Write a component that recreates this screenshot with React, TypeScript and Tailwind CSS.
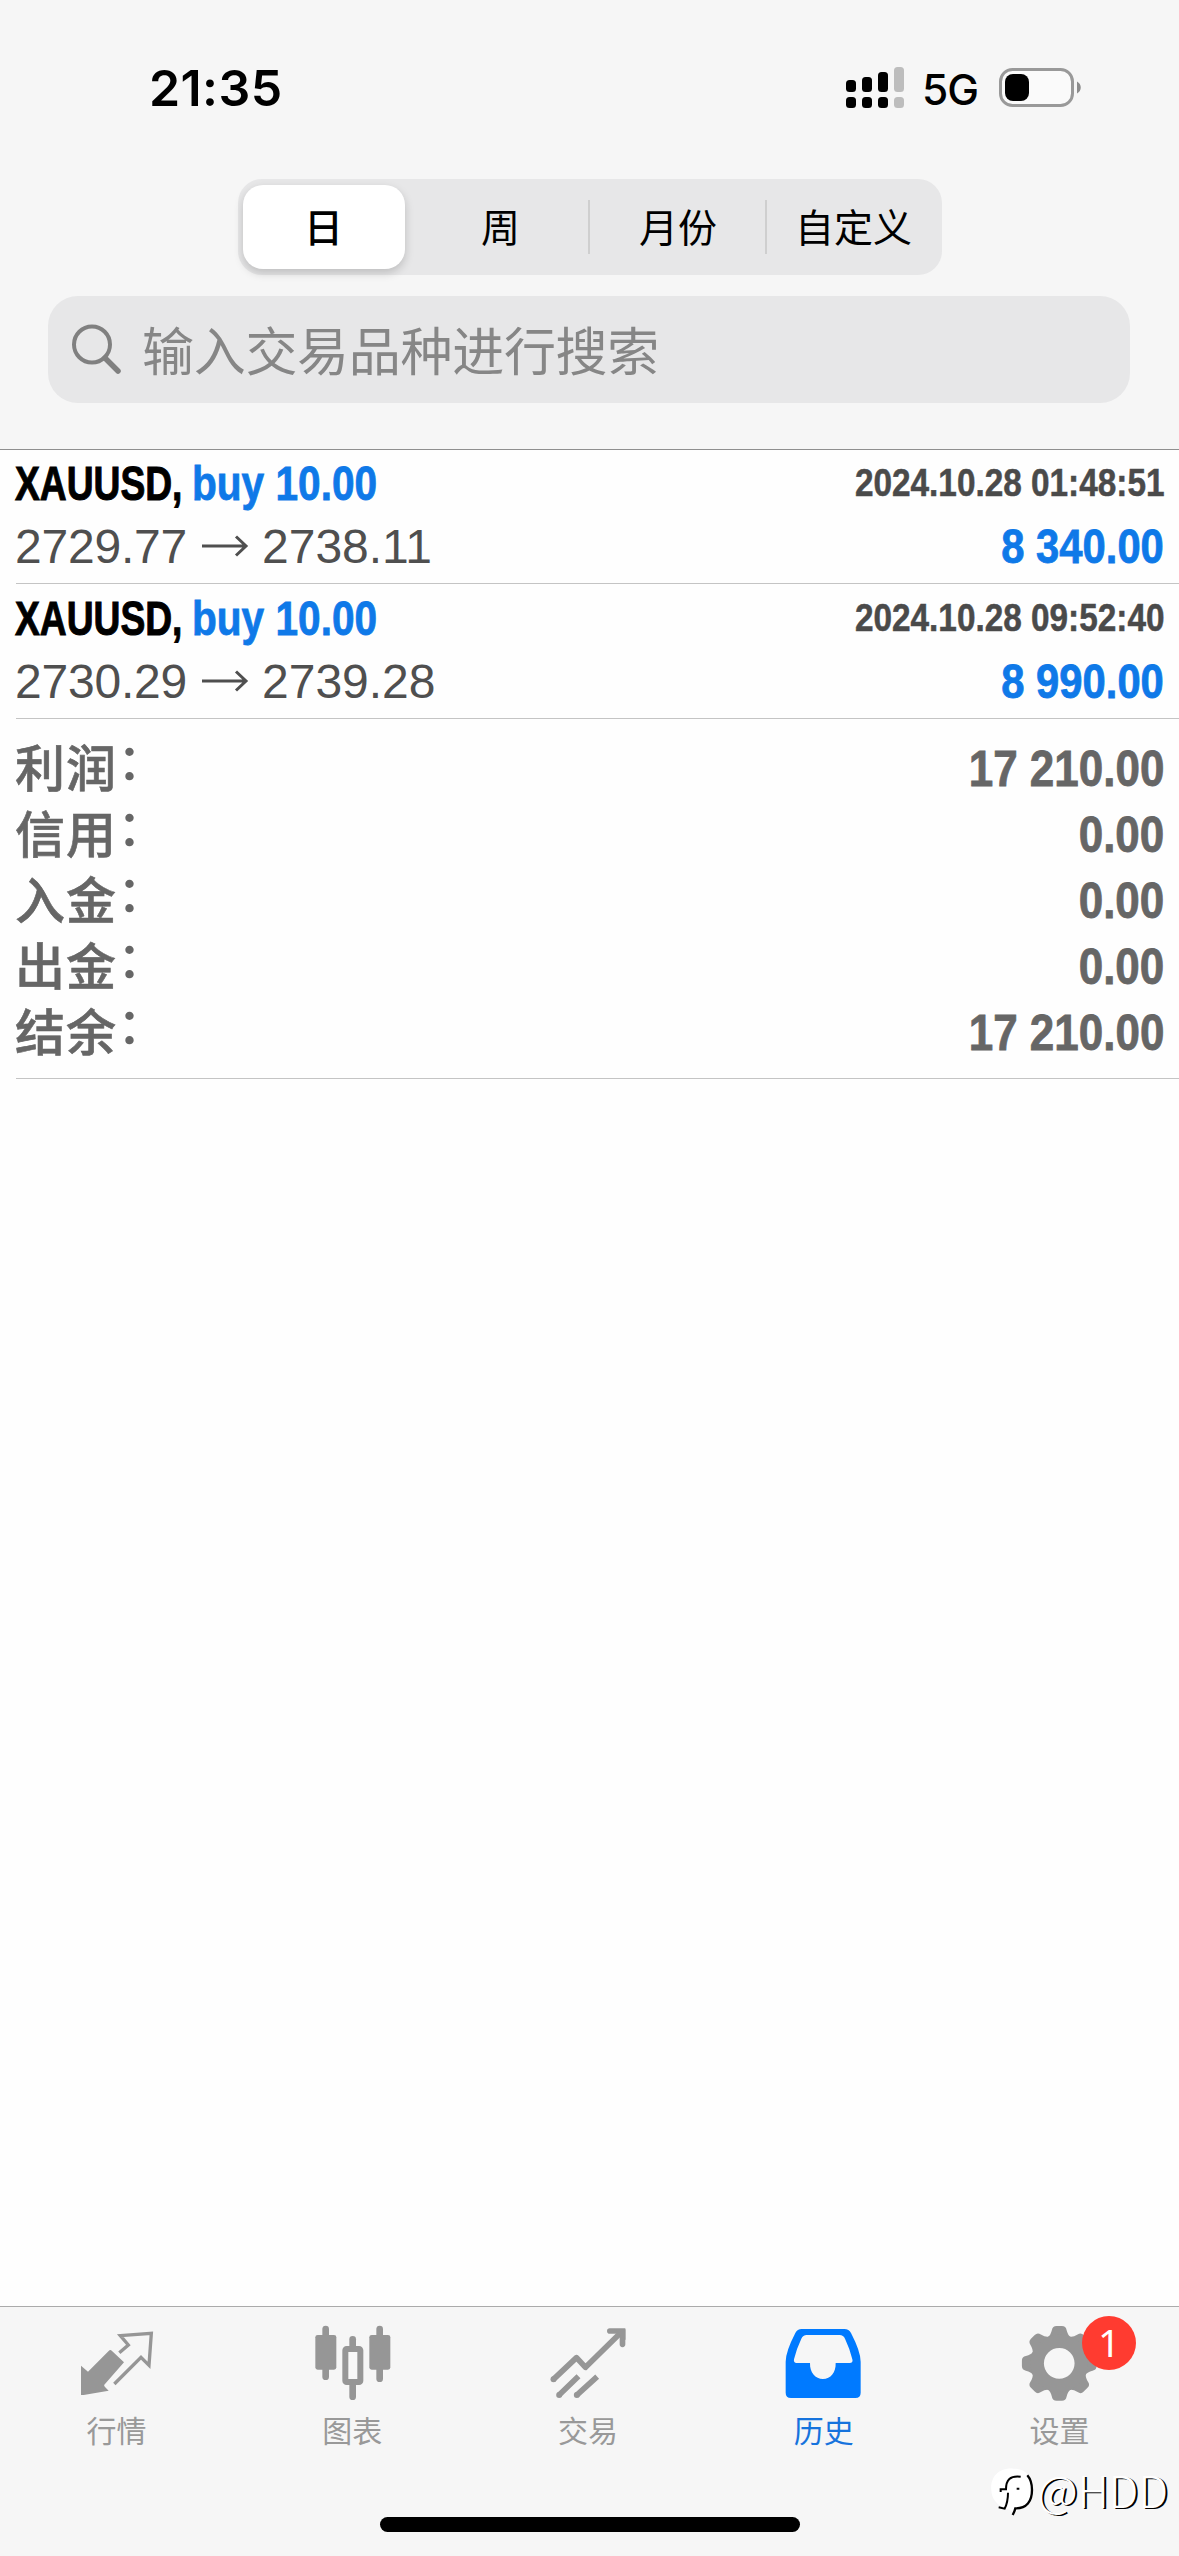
import React from "react";

const CJK = "font-['Noto_Sans_CJK_SC',sans-serif]";
const HELV = "font-['Liberation_Sans',Arial,sans-serif]";

type Deal = { from: string; to: string; time: string; profit: string };

const deals: Deal[] = [
  { from: "2729.77", to: "2738.11", time: "2024.10.28 01:48:51", profit: "8 340.00" },
  { from: "2730.29", to: "2739.28", time: "2024.10.28 09:52:40", profit: "8 990.00" },
];

const totals = [
  { label: "利润", value: "17 210.00" },
  { label: "信用", value: "0.00" },
  { label: "入金", value: "0.00" },
  { label: "出金", value: "0.00" },
  { label: "结余", value: "17 210.00" },
];

function Signal() {
  return (
    <svg className="block h-[44px] w-[60px]" viewBox="0 0 60 44">
      <g fill="#000">
        <rect x="0" y="14" width="10" height="12" rx="3.5" />
        <rect x="16" y="11" width="10" height="15" rx="3.5" />
        <rect x="32" y="6" width="10" height="20" rx="3.5" />
        <rect x="0" y="31" width="10" height="11" rx="3.5" />
        <rect x="16" y="31" width="10" height="11" rx="3.5" />
        <rect x="32" y="31" width="10" height="11" rx="3.5" />
      </g>
      <g fill="#bdbdbd">
        <rect x="48" y="1" width="10" height="25" rx="3.5" />
        <rect x="48" y="31" width="10" height="11" rx="3.5" />
      </g>
    </svg>
  );
}

function Battery() {
  return (
    <svg className="block h-[40px] w-[84px]" viewBox="0 0 84 40">
      <rect x="1.5" y="1.5" width="72" height="36" rx="12" fill="#fafafa" stroke="#999" strokeWidth="3" />
      <rect x="6" y="6" width="24" height="27" rx="8" fill="#000" />
      <path d="M78 13.5c5 2.5 5 9.500 0 12z" fill="#8c8c8c" />
    </svg>
  );
}

function StatusBar() {
  return (
    <div className="flex h-[179px] items-start justify-between pl-[149px] pr-[96px]">
      <div className="mt-[58px] font-['Inter',sans-serif] text-[50px] font-semibold leading-[60px] tracking-[0.4px] text-black">21:35</div>
      <div className="mt-[66px] flex items-start">
        <Signal />
        <span className="ml-[16px] mr-[21px] w-[56px] font-['Inter',sans-serif] text-[42.5px] font-medium leading-[48px] tracking-[-1px] text-black">5G</span>
        <div className="mt-[2px]"><Battery /></div>
      </div>
    </div>
  );
}

function Segments() {
  return (
    <div className={`${CJK} mx-auto flex h-[96px] w-[704px] items-center rounded-[24px] bg-[#e7e7e8] text-[39px] leading-[56px] text-black`}>
      <div className="ml-[5px] flex h-[84px] w-[162px] items-center justify-center rounded-[20px] bg-white pb-[4px] font-medium shadow-[0_4px_10px_rgba(0,0,0,0.18)]">日</div>
      <div className="ml-[7px] w-[176px] pb-[4px] pl-[2px] text-center">周</div>
      <div className="h-[54px] w-[2px] bg-[#cfcfcf]" />
      <div className="w-[175px] pb-[4px] pl-[2px] text-center">月份</div>
      <div className="h-[54px] w-[2px] bg-[#cfcfcf]" />
      <div className="w-[172px] pb-[4px] pl-[2px] text-center">自定义</div>
    </div>
  );
}

function SearchField() {
  return (
    <div className="ml-[48px] mt-[21px] flex h-[107px] w-[1082px] items-center rounded-[30px] bg-[#e7e7e8]">
      <svg className="ml-[24px] mt-[-1px] block h-[50px] w-[50px]" viewBox="0 0 50 50" fill="none" stroke="#808080">
        <circle cx="20" cy="20.500" r="18" strokeWidth="4" />
        <path d="M33 34 46 47" strokeWidth="5.500" strokeLinecap="round" />
      </svg>
      <span className={`${CJK} ml-[20px] pb-[2px] text-[52px] leading-[76px] tracking-[-0.3px] text-[#868686]`}>输入交易品种进行搜索</span>
    </div>
  );
}

function DealRow({ deal }: { deal: Deal }) {
  return (
    <div className={`${HELV} ml-[16px] h-[135px] border-b border-[#c4c4c4] pr-[15px]`}>
      <div className="flex h-[66px] items-start pt-[7px] text-[48px] font-bold leading-[56px]">
        <span className="ml-[-1px] w-[177px] origin-left scale-x-[0.775] whitespace-nowrap text-black [-webkit-text-stroke:1px_#000]">XAUUSD,</span>
        <span className="origin-left scale-x-[0.846] whitespace-nowrap text-[#0f79e8] [-webkit-text-stroke:0.8px_#0f79e8]">buy 10.00</span>
        <span className="ml-auto mt-[-1px] origin-right scale-x-[0.866] whitespace-nowrap text-[38.500px] text-[#4a4a4a] [-webkit-text-stroke:0.5px_#4a4a4a]">{deal.time}</span>
      </div>
      <div className="flex h-[62px] items-start whitespace-nowrap pt-[4px] text-[48px] leading-[56px]">
        <span className="ml-[-1px] w-[186px] tracking-[-0.2px] text-[#4f4f4f]">{deal.from}</span>
        <svg className="mt-[15px] block h-[24px] w-[48px]" viewBox="0 0 48 24" fill="none" stroke="#4f4f4f" strokeWidth="3">
          <path d="M1 12H45M35 2.500 45 12 35 21.500" />
        </svg>
        <span className="ml-[13px] text-[#4f4f4f]">{deal.to}</span>
        <span className="ml-auto origin-right scale-x-[0.870] font-bold text-[#0f79e8] [-webkit-text-stroke:0.8px_#0f79e8]">{deal.profit}</span>
      </div>
    </div>
  );
}

function Totals() {
  return (
    <div className="ml-[16px] h-[360px] border-b border-[#c4c4c4] pr-[15px] pt-[15px]">
      {totals.map((t) => (
        <div key={t.label} className="flex h-[66px] items-start justify-between text-[#666]">
          <div className={`${CJK} flex items-start text-[50px] font-medium leading-[66px]`}>
            <span className="ml-[-1px] mt-[-2px] w-[102px] whitespace-nowrap tracking-[1px] [-webkit-text-stroke:0.6px_#666]">{t.label}</span>
            <span className="mt-[-9px] w-[50px]">：</span>
          </div>
          <span className={`${HELV} origin-right scale-x-[0.880] whitespace-nowrap pt-[2px] text-[50px] font-bold leading-[66px] [-webkit-text-stroke:0.8px_#666]`}>{t.value}</span>
        </div>
      ))}
    </div>
  );
}

const iconClass = "block h-[80px] w-[80px]";

function QuotesIcon() {
  return (
    <svg className={iconClass} viewBox="114 99 240 240" fill="#969696">
      <path d="M123 227 144 245 206 183Q211 177 216 183L252 217 193 284Q191 287 195 291L206 302 131 315H123Z" />
      <path d="M238 188 265 165 241 137 334 130 327 226 303 202 223 282" fill="none" stroke="#969696" strokeWidth="10" />
    </svg>
  );
}

function ChartIcon() {
  return (
    <svg className={iconClass} viewBox="821 99 240 240" fill="#969696">
      <rect x="825" y="135" width="63" height="104" rx="7" />
      <rect x="846" y="107" width="20" height="163" rx="10" />
      <rect x="987" y="135" width="63" height="104" rx="7" />
      <rect x="1008" y="107" width="20" height="169" rx="10" />
      <rect x="927" y="138" width="20" height="50" rx="10" />
      <rect x="927" y="265" width="20" height="65" rx="10" />
      <rect x="915" y="177" width="45" height="99" rx="4" fill="#f8f8f8" stroke="#969696" strokeWidth="18" />
    </svg>
  );
}

function TradeIcon() {
  return (
    <svg className={iconClass} viewBox="148.5 99 240 240" fill="none" stroke="#969696" strokeWidth="17">
      <path d="M161 269 231 203 258 232 362 130" strokeLinejoin="round" />
      <path d="M331 123H369V163" strokeLinecap="round" />
      <path d="M345 118H378V150Z" fill="#969696" stroke="none" />
      <path d="M178 316 237 259M231 316 293 260" />
      <g fill="#969696" stroke="none">
        <circle cx="162" cy="268" r="9" />
        <circle cx="179" cy="315" r="9" />
        <circle cx="232" cy="315" r="9" />
      </g>
    </svg>
  );
}

function HistoryIcon() {
  return (
    <svg className={iconClass} viewBox="856 99 240 240">
      <path
        fill="#007aff"
        fillRule="evenodd"
        d="M906 117H1034Q1048 117 1054 129Q1083 185 1083 215V308Q1083 324 1067 324H874Q858 324 858 308V215Q858 185 887 129Q893 117 906 117ZM921 135Q910 135 905 146Q891 175 883 208Q881 219 891 219H931C930 248 947 267 970 267S1009 248 1008 219H1050Q1061 219 1058 208Q1050 175 1036 146Q1031 135 1020 135Z"
      />
    </svg>
  );
}

function SettingsIcon() {
  const teeth = [0, 45, 90, 135, 180, 225, 270, 315];
  return (
    <svg className={iconClass} viewBox="183.3 99 240 240" fill="#969696">
      {teeth.map((a) => (
        <path key={a} transform={`rotate(${a} 298 220)`} d="M264 141Q272 136 276 120Q278 108 290 108H306Q318 108 320 120Q324 136 332 141V160H264Z" />
      ))}
      <circle cx="298" cy="220" r="66" fill="none" stroke="#969696" strokeWidth="40" />
    </svg>
  );
}

function Tab({ label, active, badge, children }: { label: string; active?: boolean; badge?: string; children: React.ReactNode }) {
  return (
    <div className="flex flex-1 flex-col items-center pt-[16px]">
      <div className="relative">
        {children}
        {badge && (
          <span className="absolute left-[61px] top-[-7px] flex h-[54px] w-[54px] items-center justify-center rounded-full bg-[#ff3b30] pb-[2px] font-['Noto_Sans',sans-serif] text-[39px] leading-[52px] text-white">
            {badge}
          </span>
        )}
      </div>
      <span className={`${CJK} mr-[3px] mt-[4px] text-[30px] leading-[44px] ${active ? "text-[#1673dd]" : "text-[#999]"}`}>{label}</span>
    </div>
  );
}

function Watermark() {
  return (
    <div className="absolute bottom-[36px] right-[11px] flex items-center">
      <svg className="block h-[52px] w-[46px]" viewBox="0 0 138 156">
        <path d="M70 8C20 4 0 40 4 74C6 98 18 108 26 116L68 136Q72 146 64 150Q76 146 84 130C116 128 128 108 128 74C130 36 110 8 70 8Z" fill="#fff" />
        <path d="M68 147Q74 137 76 127C110 128 126 106 126 72Q126 44 112 28" fill="none" stroke="#000" strokeWidth="7" />
        <path d="M32 78V70H48C48 42 60 28 92 32M54 80Q54 108 44 128L26 124M80 68H88" fill="none" stroke="#000" strokeWidth="6" />
      </svg>
      <span className={`${CJK} mb-[5px] ml-[2px] text-[44px] font-light leading-[52px] text-white [text-shadow:2px_1px_0_#000]`}>@HDD</span>
    </div>
  );
}

export default function App() {
  return (
    <div className="relative flex h-[2556px] w-[1179px] flex-col overflow-hidden bg-[#fefefe]">
      <header className="h-[450px] border-b border-[#8f8f8f] bg-[#f6f6f6]">
        <StatusBar />
        <Segments />
        <SearchField />
      </header>
      <main className="mt-[-1px] flex-1">
        {deals.map((d) => (
          <DealRow key={d.time} deal={d} />
        ))}
        <Totals />
      </main>
      <footer className="flex h-[250px] flex-col border-t border-[#ababab] bg-[#f6f6f6]">
        <nav className="flex">
          <Tab label="行情"><QuotesIcon /></Tab>
          <Tab label="图表"><ChartIcon /></Tab>
          <Tab label="交易"><TradeIcon /></Tab>
          <Tab label="历史" active><HistoryIcon /></Tab>
          <Tab label="设置" badge="1"><SettingsIcon /></Tab>
        </nav>
        <div className="mx-auto mb-[24px] mt-auto h-[15px] w-[420px] rounded-full bg-black" />
      </footer>
      <Watermark />
    </div>
  );
}
